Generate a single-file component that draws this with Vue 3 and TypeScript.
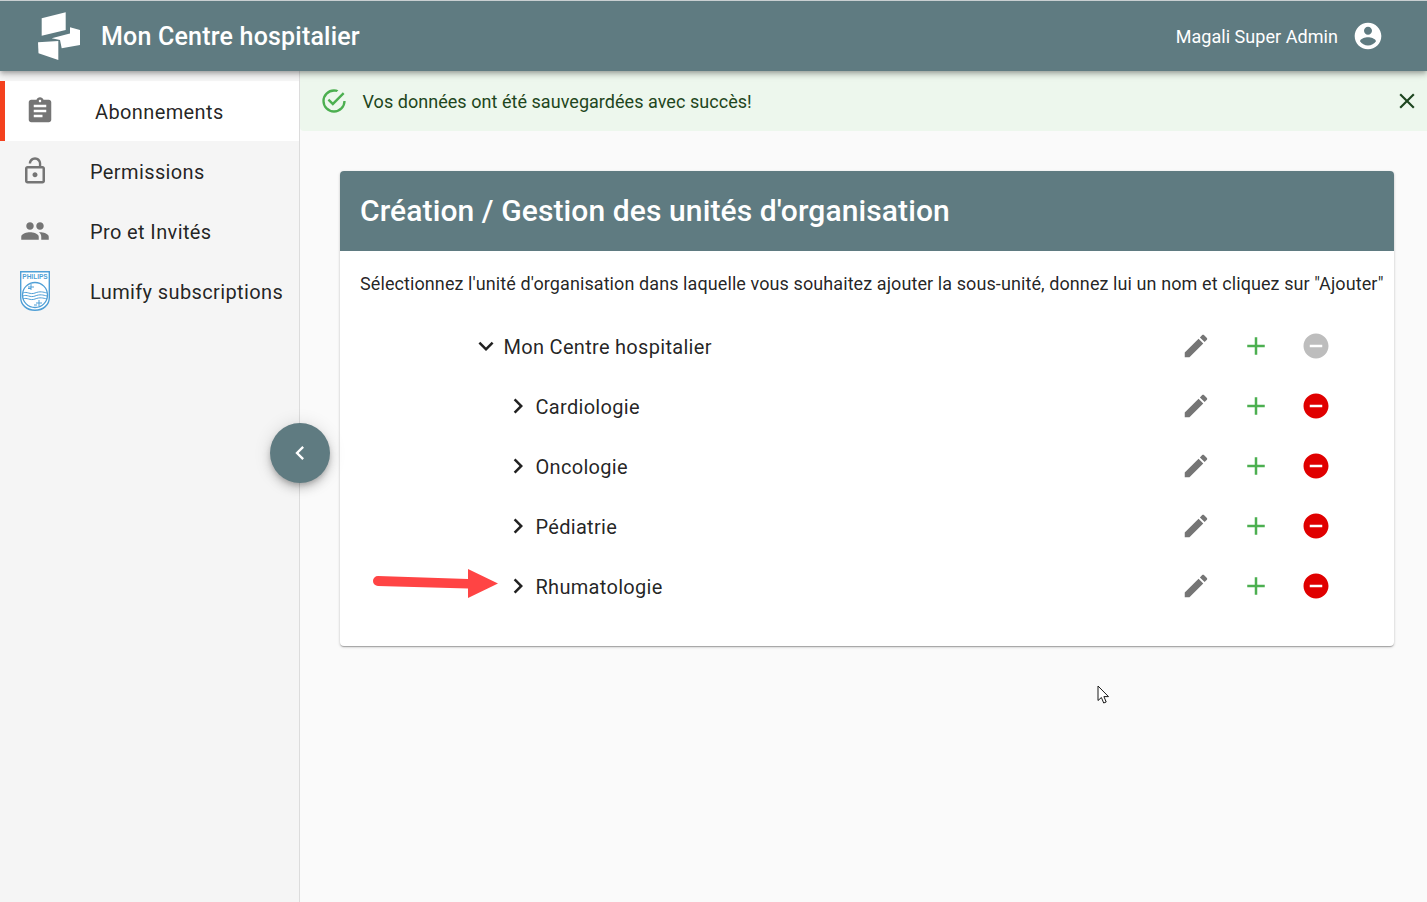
<script setup lang="ts">
const icons = {
  assignment: 'M19 3h-4.18C14.4 1.84 13.3 1 12 1c-1.3 0-2.4.84-2.82 2H5c-1.1 0-2 .9-2 2v14c0 1.1.9 2 2 2h14c1.1 0 2-.9 2-2V5c0-1.1-.9-2-2-2zm-7 0c.55 0 1 .45 1 1s-.45 1-1 1-1-.45-1-1 .45-1 1-1zm2 14H7v-2h7v2zm3-4H7v-2h10v2zm0-4H7V7h10v2z',
  lock: 'M12 17c1.1 0 2-.9 2-2s-.9-2-2-2-2 .9-2 2 .9 2 2 2zm6-9h-1V6c0-2.76-2.24-5-5-5S7 3.24 7 6h1.9c0-1.71 1.39-3.1 3.1-3.1 1.71 0 3.1 1.39 3.1 3.1v2H6c-1.1 0-2 .9-2 2v10c0 1.1.9 2 2 2h12c1.1 0 2-.9 2-2V10c0-1.1-.9-2-2-2zm0 12H6V10h12v10z',
  people: 'M16 11c1.66 0 2.99-1.34 2.99-3S17.66 5 16 5c-1.66 0-3 1.34-3 3s1.34 3 3 3zm-8 0c1.66 0 2.99-1.34 2.99-3S9.66 5 8 5C6.34 5 5 6.34 5 8s1.34 3 3 3zm0 2c-2.33 0-7 1.17-7 3.5V19h14v-2.5c0-2.33-4.67-3.5-7-3.5zm8 0c-.29 0-.62.02-.97.05 1.16.84 1.97 1.97 1.97 3.45V19h6v-2.5c0-2.33-4.67-3.5-7-3.5z',
  account: 'M12 2C6.48 2 2 6.48 2 12s4.48 10 10 10 10-4.48 10-10S17.52 2 12 2zm0 3c1.66 0 3 1.34 3 3s-1.34 3-3 3-3-1.34-3-3 1.34-3 3-3zm0 14.2c-2.5 0-4.71-1.28-6-3.22.03-1.99 4-3.08 6-3.08 1.99 0 5.97 1.09 6 3.08-1.29 1.94-3.5 3.22-6 3.22z',
  success: 'M20,12A8,8 0 0,1 12,20A8,8 0 0,1 4,12A8,8 0 0,1 12,4C12.76,4 13.5,4.11 14.2,4.31L15.77,2.74C14.61,2.26 13.34,2 12,2A10,10 0 0,0 2,12A10,10 0 0,0 12,22A10,10 0 0,0 22,12M7.91,10.08L6.5,11.5L11,16L21,6L19.59,4.58L11,13.17L7.91,10.08Z',
  close: 'M19 6.41L17.59 5 12 10.59 6.41 5 5 6.41 10.59 12 5 17.59 6.41 19 12 13.41 17.59 19 19 17.59 13.41 12z',
  edit: 'M3 17.25V21h3.75L17.81 9.94l-3.75-3.75L3 17.25zM20.71 7.04c.39-.39.39-1.02 0-1.41l-2.34-2.34c-.39-.39-1.02-.39-1.41 0l-1.83 1.83 3.75 3.75 1.83-1.83z',
  add: 'M19 13h-6v6h-2v-6H5v-2h6V5h2v6h6v2z',
  remove: 'M12 2C6.48 2 2 6.48 2 12s4.48 10 10 10 10-4.48 10-10S17.52 2 12 2zm5 11H7v-2h10v2z',
  more: 'M16.59 8.59L12 13.17 7.41 8.59 6 10l6 6 6-6z',
  right: 'M10 6L8.59 7.41 13.17 12l-4.58 4.59L10 18l6-6z',
  left: 'M15.41 7.41L14 6l-6 6 6 6 1.41-1.41L10.83 12z',
}

const menu = [
  { label: 'Abonnements', icon: icons.assignment, active: true },
  { label: 'Permissions', icon: icons.lock },
  { label: 'Pro et Invités', icon: icons.people },
  { label: 'Lumify subscriptions', philips: true },
]

const units = [
  { name: 'Mon Centre hospitalier', root: true },
  { name: 'Cardiologie' },
  { name: 'Oncologie' },
  { name: 'Pédiatrie' },
  { name: 'Rhumatologie' },
]
</script>

<template>
  <div class="app">
    <header class="topbar">
      <svg class="topbar__logo" viewBox="0 0 44 50" fill="#fff">
        <polygon points="4.700,7.300 28.700,1.300 28.700,19 4.700,24.700" />
        <polygon points="33,16.300 43,19 43,34 24.700,37.300 23,29 14.700,27.300 29,23.500 33,22.500" />
        <polygon points="1,31.300 21.300,30 21.300,49 1.500,42.300" />
      </svg>
      <span class="topbar__title">Mon Centre hospitalier</span>
      <span class="topbar__user">Magali Super Admin</span>
      <svg class="topbar__avatar" viewBox="0 0 24 24" fill="#fff"><path :d="icons.account" /></svg>
    </header>

    <div class="layout">
      <aside class="sidebar">
        <div
          v-for="item in menu"
          :key="item.label"
          class="menu-item"
          :class="{ 'menu-item--active': item.active }"
        >
          <svg v-if="item.philips" class="philips" viewBox="0 0 30 40">
            <path d="M.7.7h28.6v26c0 7-6 12.6-14.3 12.6S.7 33.700.7 26.700z" fill="#fff" stroke="#4f9fd6" stroke-width="1.400" />
            <text x="15" y="8" text-anchor="middle" class="philips__text">PHILIPS</text>
            <circle cx="15" cy="24" r="12.500" fill="none" stroke="#4f9fd6" stroke-width="1.300" />
            <path d="M3 22c4-2 7 2 12 0s8-1 12 0M3 25c4-2 7 2 12 0s8-1 12 0M3 28c4-2 7 2 12 0s8-1 12 0" fill="none" stroke="#4f9fd6" stroke-width="1" />
            <path d="M11 13v6M8 16h6M8 17.500h3M19 29v6M16 32h6M14 34h3" fill="none" stroke="#4f9fd6" stroke-width="1" />
          </svg>
          <svg v-else class="menu-item__icon" viewBox="0 0 24 24" fill="#757575"><path :d="item.icon" /></svg>
          <span class="menu-item__label">{{ item.label }}</span>
        </div>
      </aside>

      <main class="content">
        <div class="alert">
          <svg class="alert__icon" viewBox="0 0 24 24" fill="#4caf50"><path :d="icons.success" /></svg>
          <span class="alert__text">Vos données ont été sauvegardées avec succès!</span>
          <svg class="alert__close" viewBox="0 0 24 24" fill="#1e4620"><path :d="icons.close" /></svg>
        </div>

        <section class="card">
          <h1 class="card__title">Création / Gestion des unités d'organisation</h1>
          <div class="card__body">
            <p class="card__hint">Sélectionnez l'unité d'organisation dans laquelle vous souhaitez ajouter la sous-unité, donnez lui un nom et cliquez sur "Ajouter"</p>
            <div
              v-for="unit in units"
              :key="unit.name"
              class="unit"
              :class="{ 'unit--child': !unit.root }"
            >
              <svg class="icon" viewBox="0 0 24 24" fill="#212121"><path :d="unit.root ? icons.more : icons.right" /></svg>
              <span class="unit__name">{{ unit.name }}</span>
              <svg class="icon" viewBox="0 0 24 24" fill="#757575"><path :d="icons.edit" /></svg>
              <svg class="icon" viewBox="0 0 24 24" fill="#4caf50"><path :d="icons.add" /></svg>
              <svg class="icon" viewBox="0 0 24 24" :fill="unit.root ? '#bdbdbd' : '#e00000'"><path :d="icons.remove" /></svg>
            </div>
          </div>
        </section>
      </main>
    </div>

    <button class="collapse" type="button">
      <svg viewBox="0 0 24 24" fill="#fff"><path :d="icons.left" /></svg>
    </button>

    <!-- annotation drawn over the screenshot -->
    <svg class="arrow" viewBox="0 0 128 32">
      <path d="M6 7 96 10 96 0 126 14.500 96 29 96 19.500 6 17A5 5 0 0 1 6 7z" fill="#ff4444" />
    </svg>
    <svg class="cursor" viewBox="0 0 14 20">
      <path d="M1 1v14.500l3.400-3 2.300 5.500 2.500-1-2.300-5.400h4.600z" fill="#fff" stroke="#1a1a1a" stroke-width="1" />
    </svg>
  </div>
</template>

<style>
html,
body {
  margin: 0;
  background: #fafafa;
}
</style>

<style scoped>
.app {
  position: relative;
  height: 902px;
  overflow: hidden;
  display: flex;
  flex-direction: column;
  font-family: Roboto, "Liberation Sans", sans-serif;
  color: rgba(0, 0, 0, 0.87);
}

.topbar {
  position: relative;
  z-index: 2;
  box-sizing: border-box;
  height: 71px;
  flex: none;
  display: flex;
  align-items: center;
  padding-left: 37px;
  padding-right: 43px;
  background: #5f7b81;
  border-top: 1px solid #c9cfd1;
  color: #fff;
  box-shadow: 0 2px 4px -1px rgba(0, 0, 0, 0.2), 0 4px 5px rgba(0, 0, 0, 0.14), 0 1px 10px rgba(0, 0, 0, 0.12);
}

.topbar__logo {
  width: 44px;
  height: 50px;
  margin-right: 20px;
}

.topbar__title {
  font-size: 25px;
  font-weight: 500;
  letter-spacing: 0.2px;
  flex: 1;
}

.topbar__user {
  font-size: 18px;
  letter-spacing: 0.05px;
  margin-right: 14px;
}

.topbar__avatar {
  width: 32px;
  height: 32px;
}

.layout {
  flex: 1;
  display: flex;
  min-height: 0;
}

.sidebar {
  box-sizing: border-box;
  width: 300px;
  flex: none;
  padding-top: 10px;
  background: #f5f5f5;
  border-right: 1px solid #dcdcdc;
}

.menu-item {
  height: 60px;
  display: flex;
  align-items: center;
  gap: 40px;
  padding-left: 20px;
}

.menu-item--active {
  background: #fff;
  border-left: 5px solid #f4411e;
}

.menu-item__icon {
  width: 30px;
  height: 30px;
  flex: none;
}

.menu-item__label {
  margin-top: 2px;
  font-size: 20px;
  letter-spacing: 0.38px;
  white-space: nowrap;
}

.philips {
  width: 30px;
  height: 40px;
  flex: none;
}

.philips__text {
  font-family: "Liberation Sans", sans-serif;
  font-size: 6.500px;
  font-weight: 700;
  fill: #4f9fd6;
}

.content {
  flex: 1;
  min-width: 0;
}

.alert {
  height: 60px;
  display: flex;
  align-items: center;
  padding-left: 20px;
  padding-right: 7px;
  background: #edf7ed;
  border-bottom-left-radius: 4px;
  color: #1e4620;
}

.alert__icon {
  width: 28px;
  height: 28px;
  margin-right: 14.500px;
}

.alert__text {
  flex: 1;
  font-size: 18px;
  letter-spacing: 0.04px;
}

.alert__close {
  width: 26px;
  height: 26px;
}

.card {
  margin: 40px 33px 0 40px;
  background: #fff;
  border-radius: 4px;
  overflow: hidden;
  box-shadow: 0 1px 3px rgba(0, 0, 0, 0.2), 0 1px 1px rgba(0, 0, 0, 0.14), 0 2px 1px -1px rgba(0, 0, 0, 0.12);
}

.card__title {
  margin: 0;
  height: 80px;
  display: flex;
  align-items: center;
  padding-left: 20px;
  padding-bottom: 1px;
  box-sizing: border-box;
  background: #5f7b81;
  color: #fff;
  font-size: 30px;
  font-weight: 500;
  letter-spacing: 0.1px;
}

.card__body {
  padding: 20px 48px 30px 20px;
}

.card__hint {
  margin: 0 -40px 20px 0;
  height: 25px;
  line-height: 25px;
  font-size: 18px;
  letter-spacing: 0.09px;
  white-space: nowrap;
}

.unit {
  height: 60px;
  display: flex;
  align-items: center;
  padding-left: 111px;
}

.unit--child {
  padding-left: 143px;
}

.unit__name {
  flex: 1;
  margin-top: 2px;
  margin-left: 2.500px;
  font-size: 20px;
  letter-spacing: 0.3px;
}

.icon {
  width: 30px;
  height: 30px;
  flex: none;
}

.icon + .icon {
  margin-left: 30px;
}

.unit .icon:last-child {
  margin-right: 15px;
}

.collapse {
  position: absolute;
  left: 270px;
  top: 423px;
  z-index: 3;
  width: 60px;
  height: 60px;
  padding: 0;
  border: 0;
  border-radius: 50%;
  display: flex;
  align-items: center;
  justify-content: center;
  background: #5f7b81;
  box-shadow: 0 3px 5px -1px rgba(0, 0, 0, 0.2), 0 6px 10px rgba(0, 0, 0, 0.14), 0 1px 18px rgba(0, 0, 0, 0.12);
}

.collapse svg {
  width: 28px;
  height: 28px;
}

.arrow {
  position: absolute;
  left: 372px;
  top: 569px;
  width: 128px;
  height: 32px;
}

.cursor {
  position: absolute;
  left: 1097px;
  top: 685px;
  width: 14px;
  height: 20px;
}
</style>
